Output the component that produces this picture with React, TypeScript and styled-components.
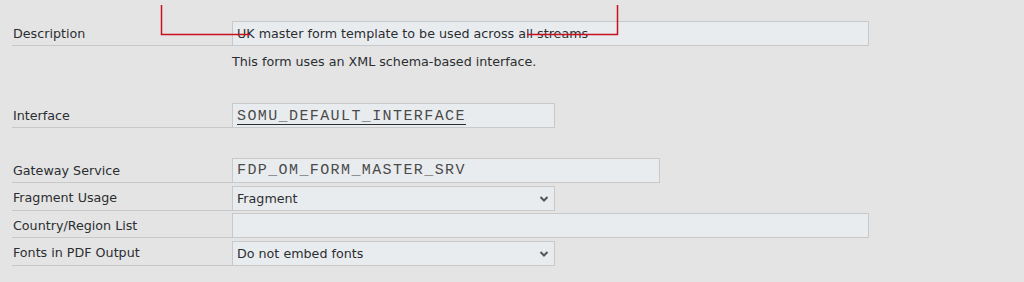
import React from 'react'
import styled, { createGlobalStyle } from 'styled-components'

const GlobalStyle = createGlobalStyle`
  html, body {
    margin: 0;
    padding: 0;
    background: #e4e4e4;
  }
  body {
    font-family: "DejaVu Sans", Tahoma, sans-serif;
    font-size: 12.7px;
    color: #2b2e31;
  }
`

const rows = [
  { label: 'Gateway Service', value: 'FDP_OM_FORM_MASTER_SRV', width: 428, mono: true },
  { label: 'Fragment Usage', value: 'Fragment', width: 323, select: true },
  { label: 'Country/Region List', value: '', width: 637 },
  { label: 'Fonts in PDF Output', value: 'Do not embed fonts', width: 323, select: true },
]

const App = () => {
  return (
    <Page>
      <GlobalStyle />
      <Form>
        <Row>
          <Label>Description</Label>
          <Input width={637}>UK master form template to be used across all streams</Input>
        </Row>
        <Help>This form uses an XML schema-based interface.</Help>
        <Row spaced>
          <Label>Interface</Label>
          <Input width={323} mono>
            <Link>SOMU_DEFAULT_INTERFACE</Link>
          </Input>
        </Row>
        <Group>
          {rows.map((r) => (
            <Row key={r.label}>
              <Label>{r.label}</Label>
              <Input width={r.width} mono={r.mono}>
                {r.value}
                {r.select && <Chevron />}
              </Input>
            </Row>
          ))}
        </Group>
      </Form>
      <Annotation width="1024" height="60" viewBox="0 0 1024 60">
        <polyline points="161.5,5 161.5,34.5 250,34.5" />
        <polyline points="527,34.5 617.5,34.5 617.5,5" />
      </Annotation>
    </Page>
  )
}

const Chevron = () => (
  <ChevronSvg width="10" height="8" viewBox="0 0 10 8">
    <path d="M1.5 2 L5 5.5 L8.5 2" />
  </ChevronSvg>
)

const Page = styled.div`
  position: relative;
  width: 1024px;
  height: 282px;
  overflow: hidden;
`

const Form = styled.div`
  display: flex;
  flex-direction: column;
  padding: 21px 0 0 12px;
`

const Group = styled.div`
  display: flex;
  flex-direction: column;
  gap: 2.5px;
  margin-top: 30px;
`

const Row = styled.div<{ spaced?: boolean }>`
  display: flex;
  align-items: stretch;
  height: 25px;
  ${({ spaced }) => spaced && `margin-top: 33px;`}
`

const Label = styled.div`
  width: 220px;
  box-sizing: border-box;
  padding-left: 1px;
  display: flex;
  align-items: center;
  border-bottom: 1px solid #c8c8c8;
  color: #2b2e31;
`

const Input = styled.div<{ width: number; mono?: boolean }>`
  position: relative;
  width: ${({ width }) => width}px;
  box-sizing: border-box;
  display: flex;
  align-items: center;
  padding-left: 4px;
  background: #e9ecef;
  border: 1px solid #c9c9c9;
  ${({ mono }) =>
    mono &&
    `
    font-family: "Liberation Mono", "Courier New", monospace;
    font-size: 15px;
    letter-spacing: 1.4px;
    color: #4a4a4a;
  `}
`

const Link = styled.span`
  border-bottom: 1px solid #2b2e31;
  line-height: 15px;
  margin-top: 2px;
`

const Help = styled.div`
  padding-left: 220px;
  height: 16px;
  margin-top: 8px;
  line-height: 16px;
`

const ChevronSvg = styled.svg`
  position: absolute;
  right: 5px;
  top: 8px;
  fill: none;
  stroke: #555;
  stroke-width: 2;
`

const Annotation = styled.svg`
  position: absolute;
  left: 0;
  top: 0;
  pointer-events: none;
  fill: none;
  stroke: #c8101e;
  stroke-width: 1.5;
`

export default App
